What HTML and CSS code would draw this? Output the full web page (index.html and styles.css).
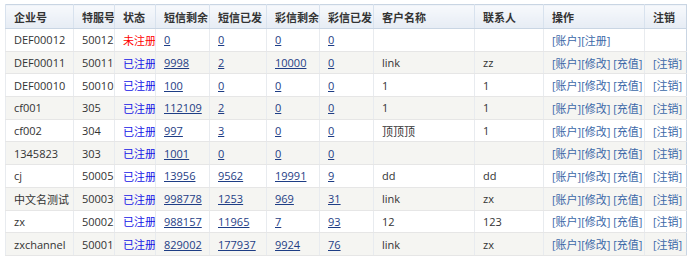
FILE: index.html
```html
<!DOCTYPE html>
<html>
<head>
<meta charset="utf-8">
<link rel="stylesheet" href="styles.css">
</head>
<body>
<table class="grid">
  <colgroup>
    <col class="c1"><col class="c2"><col class="c3"><col class="c4"><col class="c5"><col class="c6"><col class="c7"><col class="c8"><col class="c9"><col class="c10"><col class="c11">
  </colgroup>
  <thead>
    <tr><th>企业号</th><th>特服号</th><th>状态</th><th>短信剩余</th><th>短信已发</th><th>彩信剩余</th><th>彩信已发</th><th>客户名称</th><th>联系人</th><th>操作</th><th>注销</th></tr>
  </thead>
  <tbody>
    <tr><td>DEF00012</td><td>50012</td><td><span class="no">未注册</span></td><td><a class="num">0</a></td><td><a class="num">0</a></td><td><a class="num">0</a></td><td><a class="num">0</a></td><td></td><td></td><td><a class="op">[账户]</a><a class="op">[注册]</a></td><td></td></tr>
    <tr><td>DEF00011</td><td>50011</td><td><span class="yes">已注册</span></td><td><a class="num">9998</a></td><td><a class="num">2</a></td><td><a class="num">10000</a></td><td><a class="num">0</a></td><td>link</td><td>zz</td><td><a class="op">[账户]</a><a class="op">[修改]</a> <a class="op">[充值]</a></td><td><a class="op">[注销]</a></td></tr>
    <tr><td>DEF00010</td><td>50010</td><td><span class="yes">已注册</span></td><td><a class="num">100</a></td><td><a class="num">0</a></td><td><a class="num">0</a></td><td><a class="num">0</a></td><td>1</td><td>1</td><td><a class="op">[账户]</a><a class="op">[修改]</a> <a class="op">[充值]</a></td><td><a class="op">[注销]</a></td></tr>
    <tr><td>cf001</td><td>305</td><td><span class="yes">已注册</span></td><td><a class="num">112109</a></td><td><a class="num">2</a></td><td><a class="num">0</a></td><td><a class="num">0</a></td><td>1</td><td>1</td><td><a class="op">[账户]</a><a class="op">[修改]</a> <a class="op">[充值]</a></td><td><a class="op">[注销]</a></td></tr>
    <tr><td>cf002</td><td>304</td><td><span class="yes">已注册</span></td><td><a class="num">997</a></td><td><a class="num">3</a></td><td><a class="num">0</a></td><td><a class="num">0</a></td><td>顶顶顶</td><td>1</td><td><a class="op">[账户]</a><a class="op">[修改]</a> <a class="op">[充值]</a></td><td><a class="op">[注销]</a></td></tr>
    <tr><td>1345823</td><td>303</td><td><span class="yes">已注册</span></td><td><a class="num">1001</a></td><td><a class="num">0</a></td><td><a class="num">0</a></td><td><a class="num">0</a></td><td></td><td></td><td><a class="op">[账户]</a><a class="op">[修改]</a> <a class="op">[充值]</a></td><td><a class="op">[注销]</a></td></tr>
    <tr><td>cj</td><td>50005</td><td><span class="yes">已注册</span></td><td><a class="num">13956</a></td><td><a class="num">9562</a></td><td><a class="num">19991</a></td><td><a class="num">9</a></td><td>dd</td><td>dd</td><td><a class="op">[账户]</a><a class="op">[修改]</a> <a class="op">[充值]</a></td><td><a class="op">[注销]</a></td></tr>
    <tr><td>中文名测试</td><td>50003</td><td><span class="yes">已注册</span></td><td><a class="num">998778</a></td><td><a class="num">1253</a></td><td><a class="num">969</a></td><td><a class="num">31</a></td><td>link</td><td>zx</td><td><a class="op">[账户]</a><a class="op">[修改]</a> <a class="op">[充值]</a></td><td><a class="op">[注销]</a></td></tr>
    <tr><td>zx</td><td>50002</td><td><span class="yes">已注册</span></td><td><a class="num">988157</a></td><td><a class="num">11965</a></td><td><a class="num">7</a></td><td><a class="num">93</a></td><td>12</td><td>123</td><td><a class="op">[账户]</a><a class="op">[修改]</a> <a class="op">[充值]</a></td><td><a class="op">[注销]</a></td></tr>
    <tr><td>zxchannel</td><td>50001</td><td><span class="yes">已注册</span></td><td><a class="num">829002</a></td><td><a class="num">177937</a></td><td><a class="num">9924</a></td><td><a class="num">76</a></td><td>link</td><td>zx</td><td><a class="op">[账户]</a><a class="op">[修改]</a> <a class="op">[充值]</a></td><td><a class="op">[注销]</a></td></tr>
  </tbody>
</table>
</body>
</html>
```
FILE: styles.css
```css
html, body {
  margin: 0;
  padding: 0;
  background: #ffffff;
}
body {
  padding: 4px 0 0 5px;
  font-family: "Open Sans", "Noto Sans CJK SC", sans-serif;
  font-size: 11px;
  color: #333333;
}
.grid {
  border-collapse: collapse;
  table-layout: fixed;
  width: 681px;
  border: 1px solid #c9d5e3;
}
.c1 { width: 68px; }
.c2 { width: 41px; }
.c3 { width: 41px; }
.c4 { width: 54px; }
.c5 { width: 57px; }
.c6 { width: 53px; }
.c7 { width: 54px; }
.c8 { width: 101px; }
.c9 { width: 69px; }
.c10 { width: 101px; }
.c11 { width: 42px; }
.grid th {
  height: 23px;
  padding: 0 0 0 8px;
  text-align: left;
  font-weight: bold;
  color: #333333;
  background: linear-gradient(#f7f9fc, #e6ecf4);
  border-left: 1px solid #d8e2ee;
  border-bottom: 1px solid #c9d5e3;
  white-space: nowrap;
  overflow: hidden;
}
.grid td {
  height: 21.7px;
  padding: 0 0 0 8px;
  text-align: left;
  border-left: 1px solid #e8ebef;
  border-bottom: 1px solid #e6e6e6;
  white-space: nowrap;
  overflow: hidden;
}
.grid tbody tr:nth-child(even) td {
  background: #f5f5f2;
}
.num {
  color: #1e3d85;
  text-decoration: underline;
}
.op {
  color: #3b68a8;
  text-decoration: none;
}
.yes {
  color: #1414e6;
}
.no {
  color: #ff0000;
}
```
